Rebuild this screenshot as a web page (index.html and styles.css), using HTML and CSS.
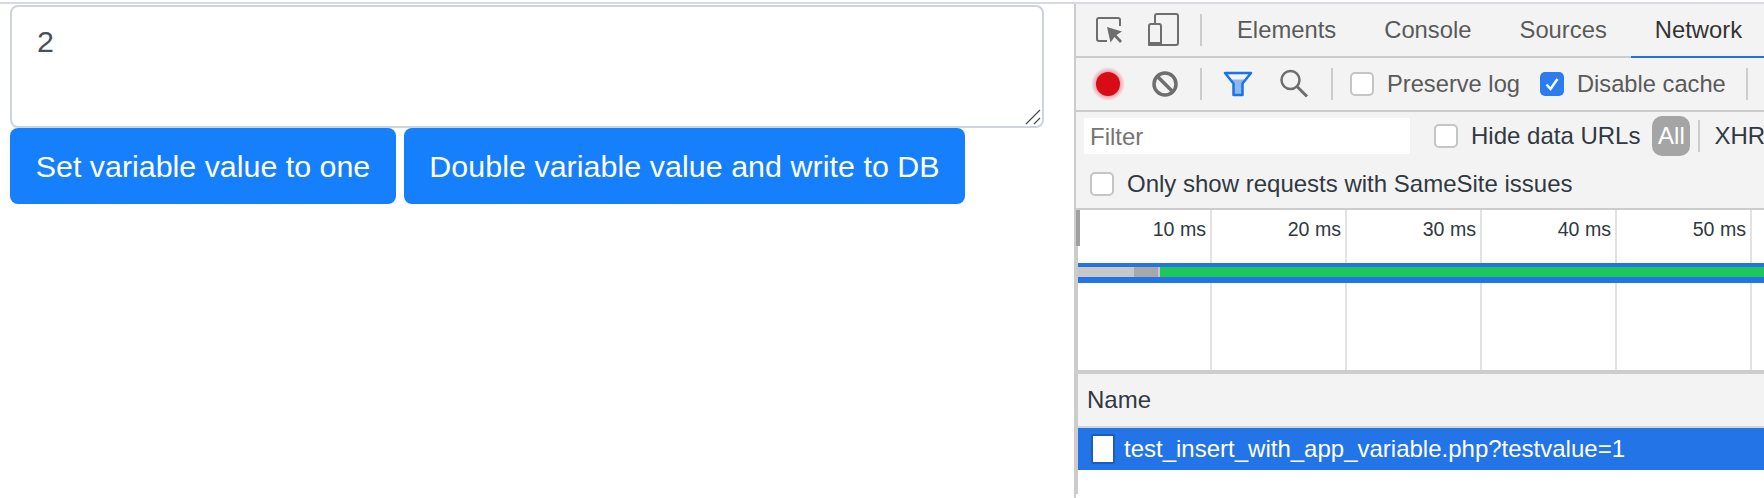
FILE: index.html
```html
<!DOCTYPE html>
<html lang="en">
<head>
<meta charset="utf-8">
<title>Network test</title>
<link rel="stylesheet" href="styles.css">
</head>
<body>
<div class="topline"></div>
<div class="split">
  <main class="page">
    <div class="box-wrap">
      <textarea class="value-box" aria-label="Value">2</textarea>
      <svg class="grip" width="16" height="16" viewBox="0 0 16 16"><path d="M1 15L15 1M9 15l6-6" fill="none" stroke="#4a4a4a" stroke-width="1.200"/></svg>
    </div>
    <div class="actions">
      <button class="btn btn-set">Set variable value to one</button>
      <button class="btn btn-double">Double variable value and write to DB</button>
    </div>
  </main>
  <section class="devtools">
    <div class="bar tabs-bar">
      <svg class="ico ico-inspect" width="30" height="30" viewBox="0 0 30 30"><path d="M12 26H4a2 2 0 0 1-2-2V5a2 2 0 0 1 2-2h19a2 2 0 0 1 2 2v6" fill="none" stroke="#6e6e6e" stroke-width="2"/><path d="M12 12l15 4.500-5.500 3.500 5.500 6-2 2-5.500-6-4 5.500z" fill="#6e6e6e"/></svg>
      <svg class="ico ico-device" width="32" height="34" viewBox="0 0 32 34"><path d="M8 11V3a2 2 0 0 1 2-2h19a2 2 0 0 1 2 2v27a2 2 0 0 1-2 2H14" fill="none" stroke="#6e6e6e" stroke-width="2"/><rect x="2" y="11" width="12" height="21" rx="2" fill="none" stroke="#6e6e6e" stroke-width="2"/><rect x="1" y="29" width="14" height="4" rx="1" fill="#6e6e6e"/></svg>
      <span class="sep sep-tabs"></span>
      <nav class="tabs">
        <span class="tab">Elements</span>
        <span class="tab">Console</span>
        <span class="tab">Sources</span>
        <span class="tab tab-on">Network</span>
      </nav>
    </div>
    <div class="bar tools-bar">
      <svg class="ico ico-record" width="36" height="36" viewBox="0 0 36 36"><defs><radialGradient id="glow"><stop offset=".7" stop-color="#d70c17" stop-opacity=".35"/><stop offset="1" stop-color="#d70c17" stop-opacity="0"/></radialGradient></defs><circle cx="18" cy="18" r="17" fill="url(#glow)"/><circle cx="18" cy="18" r="12" fill="#d70c17"/></svg>
      <svg class="ico ico-clear" width="28" height="28" viewBox="0 0 28 28"><circle cx="14" cy="14" r="11" fill="none" stroke="#6e6e6e" stroke-width="3.500"/><path d="M6.500 6.500l15 15" stroke="#6e6e6e" stroke-width="3.500"/></svg>
      <span class="sep sep-a"></span>
      <svg class="ico ico-funnel" width="30" height="26" viewBox="0 0 30 26"><path d="M2 2h26l-8.500 10.500V24h-9V12.500z" fill="#8fb7ef" stroke="#1a73e8" stroke-width="2.500" stroke-linejoin="round"/><path d="M5 3.500h20l-4 5H9z" fill="#f3f3f3"/></svg>
      <svg class="ico ico-search" width="30" height="30" viewBox="0 0 30 30"><circle cx="11.500" cy="11" r="9" fill="none" stroke="#6e6e6e" stroke-width="2.500"/><path d="M18 17.500l10 10" stroke="#6e6e6e" stroke-width="3"/></svg>
      <span class="sep sep-b"></span>
      <span class="check"></span><span class="lbl lbl-preserve">Preserve log</span>
      <span class="check check-on"><svg width="24" height="24" viewBox="0 0 24 24"><path d="M6.500 12.500l4 4.500 7-10" fill="none" stroke="#fff" stroke-width="2.500"/></svg></span><span class="lbl lbl-disable">Disable cache</span>
      <span class="sep sep-c"></span>
    </div>
    <div class="filter-panel">
      <div class="filter-row">
        <span class="filter-input">Filter</span>
        <span class="check check-hide"></span><span class="lbl lbl-dark lbl-hide">Hide data URLs</span>
        <span class="pill">All</span>
        <span class="sep sep-d"></span>
        <span class="lbl lbl-dark">XHR</span>
      </div>
      <div class="samesite-row">
        <span class="check"></span><span class="lbl lbl-dark">Only show requests with SameSite issues</span>
      </div>
    </div>
    <div class="net-panel">
      <div class="timeline">
        <div class="grid">
          <div class="cell">10 ms</div>
          <div class="cell">20 ms</div>
          <div class="cell">30 ms</div>
          <div class="cell">40 ms</div>
          <div class="cell">50 ms</div>
        </div>
        <div class="handle"></div>
        <div class="req"><span class="req-q"></span><span class="req-s"></span><span class="req-t"></span><span class="req-g"></span></div>
      </div>
      <div class="col-head">Name</div>
      <div class="row-on">
        <svg class="file" width="24" height="30" viewBox="0 0 24 30"><rect x="1" y="1" width="22" height="28" rx="1" fill="#fff" stroke="#1d5fb4" stroke-width="2"/></svg>
        <span>test_insert_with_app_variable.php?testvalue=1</span>
      </div>
    </div>
  </section>
</div>
</body>
</html>
```

FILE: styles.css
```css
* { box-sizing: border-box; }
html, body { margin: 0; height: 498px; overflow: hidden; background: #fff; }
body { font-family: "Liberation Sans", Arial, sans-serif; padding-top: 2px; }
.topline { height: 2px; background: #d8dae2; }
.split { display: flex; height: 494px; }

.page { width: 1074px; flex: none; padding: 1px 0 0 10px; }
.box-wrap { position: relative; width: 1034px; height: 123px; }
.value-box {
  display: block; width: 100%; height: 100%; margin: 0; resize: none;
  padding: 10px 25px; border: 2px solid #ced4da; border-radius: 8px;
  font: 30.400px/48px "Liberation Sans", Arial, sans-serif; color: #495057; outline: none;
}
.grip { position: absolute; right: 3px; bottom: 3px; display: block; }
.actions { display: flex; gap: 8px; }
.btn {
  height: 76px; border: 0; border-radius: 8px; background: #167ffc; color: #fff;
  font: 30.400px "Liberation Sans", Arial, sans-serif; white-space: nowrap;
}
.btn-set { width: 386px; padding: 0; }
.btn-double { width: 561px; padding: 0; letter-spacing: .05px; }

.devtools { flex: 1; min-width: 0; height: 100%; border-left: 2px solid #ccc; overflow: hidden; }
.bar { display: flex; align-items: center; height: 54px; background: #f3f3f3; border-bottom: 2px solid #ccc; white-space: nowrap; }
.ico { flex: none; display: block; }
.sep { flex: none; width: 2px; height: 32px; background: #ccc; }

.tabs-bar { padding-left: 19px; }
.ico-device { margin-left: 22px; }
.sep-tabs { margin-left: 21px; }
.tabs { display: flex; align-self: stretch; margin-left: 11px; margin-bottom: -2px; }
.tab { padding: 0 24px; font-size: 23.800px; line-height: 52px; color: #5a5a5a; height: 54px; }
.tab-on { color: #333; border-bottom: 2px solid #1a73e8; padding-right: 60px; }

.tools-bar { padding-left: 14px; }
.ico-clear { margin-left: 25px; }
.sep-a { margin-left: 21px; }
.ico-funnel { margin-left: 21px; }
.ico-search { margin-left: 26px; }
.sep-b { margin-left: 22px; }
.check { flex: none; width: 24px; height: 24px; background: #fff; border: 2px solid #c4c4c4; border-radius: 5px; }
.tools-bar .check { margin-left: 20px; }
.check-on { background: #2a7cf0; border: 0; }
.check-on svg { display: block; }
.tools-bar .sep-b + .check { margin-left: 17px; }
.lbl { flex: none; font-size: 24px; color: #5a5a5a; margin-left: 13px; white-space: nowrap; }
.tools-bar .lbl { font-size: 23.700px; }
.lbl-dark { color: #303942; }
.sep-c { margin-left: 20px; }

.filter-panel { height: 98px; background: #f3f3f3; border-bottom: 2px solid #ccc; white-space: nowrap; }
.filter-row { display: flex; align-items: center; height: 48px; padding-left: 8px; }
.filter-input { flex: none; width: 326px; height: 36px; padding-left: 6px; background: #fff; color: #757575; font-size: 24px; line-height: 38px; }
.check-hide { margin-left: 24px; }
.pill { flex: none; width: 38px; height: 40px; margin-left: 12px; border-radius: 10px; background: #a5a5a5; color: #fff; font-size: 24px; line-height: 40px; text-align: center; }
.sep-d { margin-left: 8px; height: 32px; }
.filter-row .lbl:last-child { margin-left: 14px; }
.samesite-row { display: flex; align-items: center; height: 48px; padding-left: 14px; }

.net-panel { height: 284px; border-left: 2px solid #ccc; }
.timeline { position: relative; height: 160px; background: #fff; }
.grid { display: flex; height: 100%; }
.cell { flex: none; width: 135px; padding: 7px 4px 0 0; border-right: 2px solid #e2e2e2; text-align: right; font-size: 19.600px; line-height: 24px; color: #303942; }
.cell:first-child { width: 134px; }
.handle { position: absolute; left: -2px; top: 0; width: 4px; height: 36px; background: #a0a0a0; }
.req { position: absolute; left: 0; right: 0; top: 53px; display: flex; border-top: 4px solid #2374e6; border-bottom: 6px solid #2374e6; height: 20px; }
.req-q { width: 56px; background: #c8c8c8; }
.req-s { width: 24px; background: #a8a8a8; }
.req-t { width: 2px; background: #c8c8c8; }
.req-g { flex: 1; background: #1fc75a; }

.col-head { height: 58px; padding: 0 0 0 9px; border-top: 4px solid #ccc; border-bottom: 2px solid #d4d4d4; background: #f3f3f3; font-size: 24px; line-height: 52px; color: #303942; }
.row-on { display: flex; align-items: center; gap: 9px; height: 42px; padding-left: 13px; background: #2374e6; color: #fff; font-size: 24px; white-space: nowrap; }
.file { flex: none; display: block; }
```
